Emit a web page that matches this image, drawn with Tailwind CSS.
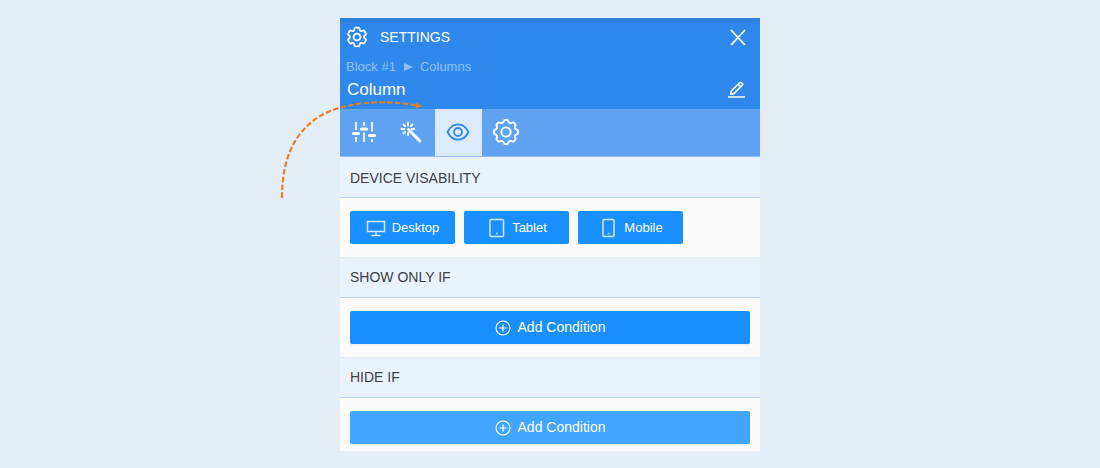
<!DOCTYPE html>
<html lang="en">
<head>
<meta charset="utf-8">
<meta name="viewport" content="width=device-width, initial-scale=1">
<title>Column settings</title>
<script src="https://cdn.jsdelivr.net/npm/@tailwindcss/browser@4"></script>
</head>
<body class="min-h-screen bg-[#e5edf6] pt-[18px] pb-4 font-['Liberation_Sans',Arial,sans-serif] text-[#3c4043]">
<main class="relative mx-auto w-full max-w-[420px] bg-[#fbfbfb]">
  <header class="bg-[#2f88ec] bg-linear-to-b from-[#2b7edb] to-[#2f88ec] to-[8px] text-white">
    <div class="flex h-[38px] items-center px-[5px]">
      <svg class="size-6" viewBox="0.5 0.5 23 23" fill="none" stroke="currentColor" stroke-width="1.7" stroke-linejoin="round" aria-hidden="true"><path d="M9.594 3.94c.09-.542.56-.94 1.11-.94h2.593c.55 0 1.02.398 1.11.94l.213 1.281c.063.374.313.686.645.87.074.04.147.083.22.127.325.196.72.257 1.075.124l1.217-.456a1.125 1.125 0 0 1 1.37.49l1.296 2.247a1.125 1.125 0 0 1-.26 1.431l-1.003.827c-.293.241-.438.613-.43.992a7.723 7.723 0 0 1 0 .255c-.008.378.137.75.43.991l1.004.827c.424.35.534.955.26 1.43l-1.298 2.247a1.125 1.125 0 0 1-1.369.491l-1.217-.456c-.355-.133-.75-.072-1.076.124a6.47 6.47 0 0 1-.22.128c-.331.183-.581.495-.644.869l-.213 1.281c-.09.543-.56.94-1.11.94h-2.594c-.55 0-1.019-.398-1.11-.94l-.213-1.281c-.062-.374-.312-.686-.644-.87a6.52 6.52 0 0 1-.22-.127c-.325-.196-.72-.257-1.076-.124l-1.217.456a1.125 1.125 0 0 1-1.369-.49l-1.297-2.247a1.125 1.125 0 0 1 .26-1.431l1.004-.827c.292-.24.437-.613.43-.991a6.932 6.932 0 0 1 0-.255c.007-.38-.138-.751-.43-.992l-1.004-.827a1.125 1.125 0 0 1-.26-1.43l1.297-2.247a1.125 1.125 0 0 1 1.37-.491l1.216.456c.356.133.751.072 1.076-.124.072-.044.146-.086.22-.128.332-.183.582-.495.644-.869l.214-1.28Z"/><circle cx="12" cy="12" r="3.3"/></svg>
      <h1 class="ml-[11px] text-[14px]">SETTINGS</h1>
      <button type="button" aria-label="Close" class="mr-[5px] ml-auto flex size-6 items-center justify-center">
        <svg class="size-4" viewBox="0 0 16 16" fill="none" stroke="currentColor" stroke-width="1.8" stroke-linecap="round" aria-hidden="true"><path d="M1.500 1.500l13 14M14.500 1.500l-13 14"/></svg>
      </button>
    </div>
    <nav aria-label="Breadcrumb" class="flex h-5 items-center gap-[7px] px-1.5 pt-0.5 text-[13px] text-[#92c0f6]">
      <a href="#">Block #1</a>
      <svg class="h-2 w-2.5" viewBox="0 0 10 8" fill="currentColor" aria-hidden="true"><path d="M1 0l9 4-9 4z"/></svg>
      <a href="#">Columns</a>
    </nav>
    <div class="flex h-[33px] items-center pr-3.5 pb-[5px] pl-[7px]">
      <h2 class="text-[17px]">Column</h2>
      <button type="button" aria-label="Rename column" class="ml-auto">
        <svg class="h-[18px] w-5" viewBox="0 0 20 18" fill="none" stroke="currentColor" stroke-width="1.6" stroke-linejoin="round" aria-hidden="true"><path d="M4.800 13.200l.5-3.200 8.300-8.300q.9-.9 1.800 0l.8.8q.9.9 0 1.800l-8.300 8.300zM12.200 3.200l2.500 2.500"/><path stroke="#cfe2fa" stroke-width="2" d="M2 16h17"/></svg>
      </button>
    </div>
  </header>
  <div role="tablist" aria-label="Setting groups" class="flex h-12 border-b border-[#8fbdf5] bg-[#5fa3f2] pl-px text-white">
    <button type="button" role="tab" aria-label="Layout" class="flex w-[47px] items-center justify-center pr-px pb-px">
      <svg class="size-6" viewBox="0 0 24 24" fill="none" stroke="currentColor" aria-hidden="true"><path stroke-width="1.700" d="M4 2v8M4 17v5M12 2v4M12 12.500v9.500M20 2v9.500M20 19v3"/><path stroke-width="3" stroke-linecap="round" d="M1.500 13.500h5M9.500 9h5M17.500 15.500h5"/></svg>
    </button>
    <button type="button" role="tab" aria-label="Effects" class="flex w-[47px] items-center justify-center pr-px pb-px">
      <svg class="size-6" viewBox="0 0 24 24" fill="none" stroke="currentColor" stroke-linecap="round" aria-hidden="true"><path stroke-width="2.900" d="M9.500 9.500L20.800 21"/><path stroke-width="2" d="M9 2.800v2.400M9 13v2M2.500 9h2.700M12.800 9h2.400M4.500 4.500l1.500 1.500M13.500 4.500L12 6M4.500 13.500L6 12"/></svg>
    </button>
    <button type="button" role="tab" aria-selected="true" aria-label="Visibility" class="flex w-[47px] items-center justify-center bg-[#dcebfb] pr-px pb-px text-[#2f88ec]">
      <svg class="size-6" viewBox="0 0 24 24" fill="none" stroke="currentColor" stroke-width="1.800" aria-hidden="true"><path d="M1.500 12C4 7 7.500 4.300 12 4.300S20 7 22.500 12C20 17 16.500 19.700 12 19.700S4 17 1.500 12z"/><circle cx="12" cy="12" r="4"/></svg>
    </button>
    <button type="button" role="tab" aria-label="Advanced" class="flex w-[47px] items-center justify-center pb-px">
      <svg class="size-7" viewBox="0 0 24 24" fill="none" stroke="currentColor" stroke-width="1.600" stroke-linecap="round" stroke-linejoin="round" aria-hidden="true">
        <circle cx="12" cy="12" r="4"/>
        <path id="tooth" d="M8.750 4.150Q9.900 3.700 10.100 2.700Q10.300 1.600 11.200 1.600H12.800Q13.700 1.600 13.900 2.700Q14.100 3.700 15.250 4.150"/>
        <use href="#tooth" transform="rotate(45 12 12)"/><use href="#tooth" transform="rotate(90 12 12)"/><use href="#tooth" transform="rotate(135 12 12)"/><use href="#tooth" transform="rotate(180 12 12)"/><use href="#tooth" transform="rotate(225 12 12)"/><use href="#tooth" transform="rotate(270 12 12)"/><use href="#tooth" transform="rotate(315 12 12)"/>
      </svg>
    </button>
  </div>

  <section aria-labelledby="device">
    <h3 id="device" class="flex h-[41px] items-center border-b border-[#bdd7f3] bg-[#eaf3fd] px-2.5 pt-0.5 text-[14px]">DEVICE VISABILITY</h3>
    <div class="flex gap-[9px] px-2.5 py-[13px] text-[13px] text-white">
      <button type="button" class="flex h-[33px] w-[105px] items-center justify-center gap-1.5 rounded-xs bg-[#1a8fff]">
        <svg class="h-5 w-5" viewBox="0 0 20 20" fill="none" stroke="#d5eaff" stroke-width="1.500" aria-hidden="true"><path d="M1.500 3.500h17v10h-17zM10 13.500v4M5.500 17.500h9"/></svg>Desktop
      </button>
      <button type="button" class="flex h-[33px] w-[105px] items-center justify-center gap-1.5 rounded-xs bg-[#1a8fff]">
        <svg class="h-5 w-5" viewBox="0 0 20 20" fill="none" stroke="#d5eaff" stroke-width="1.500" aria-hidden="true"><rect x="4" y="1.500" width="13.500" height="17" rx="1"/><path d="M10 15.500h1.500"/></svg>Tablet
      </button>
      <button type="button" class="flex h-[33px] w-[105px] items-center justify-center gap-1.5 rounded-xs bg-[#1a8fff]">
        <svg class="h-5 w-5" viewBox="0 0 20 20" fill="none" stroke="#d5eaff" stroke-width="1.500" aria-hidden="true"><rect x="5" y="1.500" width="11" height="17" rx="1"/><path d="M9.700 15.500h1.500"/></svg>Mobile
      </button>
    </div>
  </section>

  <section aria-labelledby="show">
    <h3 id="show" class="flex h-[41px] items-center border-y border-t-[#dfebf6] border-b-[#bdd7f3] bg-[#eaf3fd] px-2.5 text-[14px]">SHOW ONLY IF</h3>
    <div class="px-2.5 py-[13px]">
      <button type="button" class="flex h-[33px] w-full items-center justify-center gap-[7px] rounded-xs bg-[#1a8fff] text-[14px] text-white shadow-[0_2px_0_#f1f1f1]">
        <svg class="size-4" viewBox="0 0 16 16" fill="none" stroke="currentColor" stroke-width="1.200" aria-hidden="true"><circle cx="8" cy="8" r="7"/><path d="M8 4.500v7M4.500 8h7"/></svg>Add Condition
      </button>
    </div>
  </section>

  <section aria-labelledby="hide">
    <h3 id="hide" class="flex h-[41px] items-center border-y border-t-[#dfebf6] border-b-[#bdd7f3] bg-[#eaf3fd] px-2.5 text-[14px]">HIDE IF</h3>
    <div class="px-2.5 pt-[13px] pb-[7px]">
      <button type="button" class="flex h-[33px] w-full items-center justify-center gap-[7px] rounded-xs bg-[#42a5ff] text-[14px] text-white shadow-[0_2px_0_#f1f1f1]">
        <svg class="size-4" viewBox="0 0 16 16" fill="none" stroke="currentColor" stroke-width="1.200" aria-hidden="true"><circle cx="8" cy="8" r="7"/><path d="M8 4.500v7M4.500 8h7"/></svg>Add Condition
      </button>
    </div>
  </section>

  <!-- Callout arrow pointing at the visibility tab -->
  <svg class="pointer-events-none absolute top-[78px] -left-16 h-[106px] w-[150px]" viewBox="0 0 150 106" fill="none" aria-hidden="true">
    <path stroke="#e37e23" stroke-width="2.100" stroke-dasharray="5.500 2.300" d="M6 102C6 60 20 34 46 19C72 5 110 4 140 9.300"/>
    <path fill="#e37e23" d="M140 6.500l6.200 3.500-6.700 2.800z"/>
  </svg>
</main>
</body>
</html>
